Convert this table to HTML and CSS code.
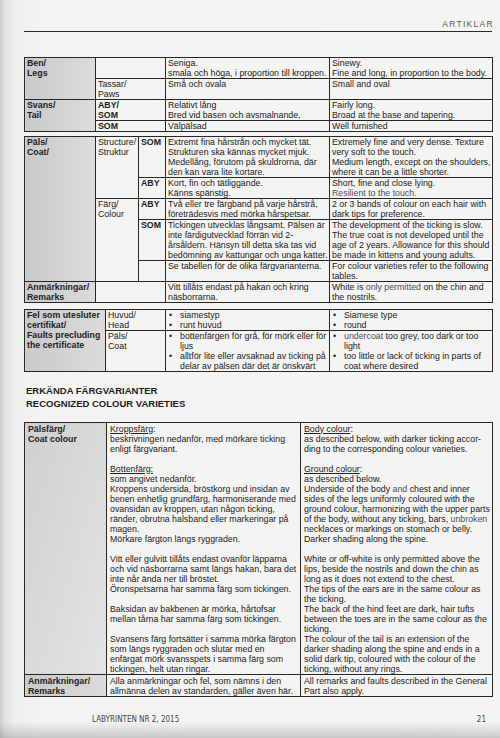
FILE: index.html
```html
<!DOCTYPE html>
<html lang="sv">
<head>
<meta charset="utf-8">
<title>Artiklar</title>
<link rel="stylesheet" href="styles.css">
</head>
<body>
<div class="page">
  <div class="header"><span>ARTIKLAR</span></div>

  <table class="t1">
    <colgroup><col class="c1"><col class="c2"><col class="c3"><col class="c4"></colgroup>
    <tr>
      <td class="lab" rowspan="2">Ben/<br>Legs</td>
      <td></td>
      <td>Seniga.<br>smala och höga, i proportion till kroppen.</td>
      <td>Sinewy.<br>Fine and long, in proportion to the body.</td>
    </tr>
    <tr>
      <td>Tassar/<br>Paws</td>
      <td>Små och ovala</td>
      <td>Small and oval</td>
    </tr>
    <tr>
      <td class="lab" rowspan="2">Svans/<br>Tail</td>
      <td class="b">ABY/<br>SOM</td>
      <td>Relativt lång<br>Bred vid basen och avsmalnande,</td>
      <td>Fairly long.<br>Broad at the base and tapering.</td>
    </tr>
    <tr>
      <td class="b">SOM</td>
      <td>Välpälsad</td>
      <td>Well furnished</td>
    </tr>
  </table>

  <table class="t1b">
    <colgroup><col class="c1"><col class="c2a"><col class="c2b"><col class="c3"><col class="c4"></colgroup>
    <tr>
      <td class="lab" rowspan="5">Päls/<br>Coat/</td>
      <td rowspan="2">Structure/<br>Struktur</td>
      <td class="b">SOM</td>
      <td>Extremt fina hårstrån och mycket tät.<br>Strukturen ska kännas mycket mjuk.<br>Medellång, förutom på skuldrorna, där<br>den kan vara lite kortare.</td>
      <td>Extremely fine and very dense. Texture<br>very soft to the touch.<br>Medium length, except on the shoulders,<br>where it can be a little shorter.</td>
    </tr>
    <tr>
      <td class="b">ABY</td>
      <td>Kort, fin och tätliggande.<br>Känns spänstig.</td>
      <td>Short, fine and close lying.<br><span class="soft">Resilient to the touch.</span></td>
    </tr>
    <tr>
      <td rowspan="3">Färg/<br>Colour</td>
      <td class="b">ABY</td>
      <td>Två eller tre färgband på varje hårstrå,<br>företrädesvis med mörka hårspetsar.</td>
      <td>2 or 3 bands of colour on each hair with<br>dark tips for preference.</td>
    </tr>
    <tr>
      <td class="b">SOM</td>
      <td>Tickingen utvecklas långsamt. Pälsen är<br>inte färdigutvecklad förrän vid 2-<br>årsåldern. Hänsyn till detta ska tas vid<br>bedömning av kattungar och unga katter.</td>
      <td>The development of the ticking is slow.<br>The true coat is not developed until the<br>age of 2 years. Allowance for this should<br>be made in kittens and young adults.</td>
    </tr>
    <tr>
      <td></td>
      <td>Se tabellen för de olika färgvarianterna.</td>
      <td>For colour varieties refer to the following<br>tables.</td>
    </tr>
    <tr>
      <td class="lab">Anmärkningar/<br>Remarks</td>
      <td colspan="2"></td>
      <td>Vitt tillåts endast på hakan och kring<br>näsborrarna.</td>
      <td>White is <span class="soft">only permitted</span> on the chin and<br>the nostrils.</td>
    </tr>
  </table>

  <table class="t2">
    <colgroup><col class="d1"><col class="d2"><col class="c3"><col class="c4"></colgroup>
    <tr>
      <td class="lab" rowspan="2">Fel som utesluter<br>certifikat/<br>Faults precluding<br>the certificate</td>
      <td>Huvud/<br>Head</td>
      <td><div class="bl"><i>•</i><span>siamestyp</span></div><div class="bl"><i>•</i><span>runt huvud</span></div></td>
      <td><div class="bl"><i>•</i><span>Siamese type</span></div><div class="bl"><i>•</i><span>round</span></div></td>
    </tr>
    <tr>
      <td>Päls/<br>Coat</td>
      <td><div class="bl"><i>•</i><span>bottenfärgen för grå, för mörk eller för<br>ljus</span></div><div class="bl"><i>•</i><span>alltför lite eller avsaknad av ticking på<br>delar av pälsen där det är önskvärt</span></div></td>
      <td><div class="bl"><i>•</i><span><span class="soft">undercoat</span> too grey, too dark or too<br>light</span></div><div class="bl"><i>•</i><span>too little or lack of ticking in parts of<br>coat where desired</span></div></td>
    </tr>
  </table>

  <h2 class="heading">ERKÄNDA FÄRGVARIANTER<br>RECOGNIZED COLOUR VARIETIES</h2>

  <table class="t3">
    <colgroup><col class="e1"><col class="e2"><col class="e3"></colgroup>
    <tr>
      <td class="lab lab3">Pälsfärg/<br>Coat colour</td>
      <td><u>Kroppsfärg</u>:<br>beskrivningen nedanför, med mörkare ticking<br>enligt färgvariant.<br>&nbsp;<br><u>Bottenfärg:</u><br>som angivet nedanför.<br>Kroppens undersida, bröstkorg und insidan av<br>benen enhetlig grundfärg, harmoniserande med<br>ovansidan av kroppen, utan någon ticking,<br>ränder, obrutna halsband eller markeringar på<br>magen.<br>Mörkare färgton längs ryggraden.<br>&nbsp;<br>Vitt eller gulvitt tillåts endast ovanför läpparna<br>och vid näsborrarna samt längs hakan, bara det<br>inte når ända ner till bröstet.<br>Öronspetsarna har samma färg som tickingen.<br>&nbsp;<br>Baksidan av bakbenen är mörka, hårtofsar<br>mellan tårna har samma färg som tickingen.<br>&nbsp;<br>Svansens färg fortsätter i samma mörka färgton<br>som längs ryggraden och slutar med en<br>enfärgat mörk svansspets i samma färg som<br>tickingen, helt utan ringar.</td>
      <td><u>Body colour</u>:<br>as described below, with darker ticking accor-<br>ding to the corresponding colour varieties.<br>&nbsp;<br><u>Ground colour</u>:<br>as described below.<br>Underside of the body <span class="soft">and</span> chest and inner<br>sides of the legs uniformly coloured with the<br>ground colour, harmonizing with the upper parts<br>of the body, without any ticking, bars, <span class="soft">unbroken</span><br>necklaces or markings on stomach or belly.<br>Darker shading along the spine.<br>&nbsp;<br>White or off-white is only permitted above the<br>lips, beside the nostrils and down the chin as<br>long as it does not extend to the chest.<br>The tips of the ears are in the same colour as<br>the ticking.<br>The back of the hind feet are dark, hair tufts<br>between the toes are in the same colour as the<br>ticking.<br>The colour of the tail is an extension of the<br>darker shading along the spine and ends in a<br>solid dark tip, coloured with the colour of the<br>ticking, without any rings.</td>
    </tr>
    <tr>
      <td class="lab">Anmärkningar/<br>Remarks</td>
      <td>Alla anmärkningar och fel, som nämns i den<br>allmänna delen av standarden, gäller även här.</td>
      <td>All remarks and faults described in the General<br>Part also apply.</td>
    </tr>
  </table>

  <div class="footer"><span>LABYRINTEN NR 2, 2015</span><span>21</span></div>
</div>
</body>
</html>
```

FILE: styles.css
```css
* { box-sizing: border-box; }
html, body { margin: 0; padding: 0; }
body {
  width: 500px;
  height: 738px;
  overflow: hidden;
  background:
    linear-gradient(to bottom, rgba(0,0,0,0) 722px, rgba(120,120,118,0.35) 738px),
    linear-gradient(to right, #cdcdcb 0, #e2e2e0 5px, #eeeeec 14px, #f3f3f1 40px, #f4f4f2 100%);
  font-family: "Liberation Sans", Arial, sans-serif;
  color: #222;
}
.page { padding: 0 8px 0 24px; }

.header {
  height: 32px;
  border-bottom: 1.5px solid #2a2a2a;
  display: flex;
  justify-content: flex-end;
  align-items: flex-end;
  padding-bottom: 2px;
}
.header span {
  font-size: 8.5px;
  line-height: 10px;
  letter-spacing: 1.3px;
  color: #555;
  margin-right: -2px;
}

table {
  border-collapse: collapse;
  table-layout: fixed;
  width: 468px;
}
td {
  border: 1px solid #262626;
  padding: 0 2px;
  vertical-align: top;
  font-size: 8.8px;
  line-height: 10px;
  white-space: nowrap;
  overflow: hidden;
}
.lab {
  font-weight: bold;
  background: linear-gradient(to right, #c9c9c9, #dcdcdc);
}
.b { font-weight: bold; }
.soft { color: #4a4f5a; }

.c1 { width: 71px; }
.c2 { width: 70px; }
.c2a { width: 43px; }
.c2b { width: 27px; }
.c3 { width: 164px; }
.c4 { width: 163px; }
.d1 { width: 81px; }
.d2 { width: 60px; }
.e1 { width: 82px; }
.e2 { width: 194px; }
.e3 { width: 192px; }

.t1 { margin-top: 25px; }
.t1b { margin-top: 4px; }
.t2 { margin-top: 6px; }

.bl { display: flex; }
.bl i { font-style: normal; width: 12px; flex: none; padding-left: 1px; }

.heading {
  margin: 12px 0 11px 2px;
  font-size: 9.5px;
  line-height: 13.3px;
  font-weight: bold;
  color: #1e1e1e;
}

.t3 td { padding: 1px 3px 0; }
.t3 .lab3 { background: linear-gradient(to bottom right, #cfcfcf, #e4e4e4); }

.footer {
  display: flex;
  justify-content: space-between;
  margin-top: 18px;
  padding: 0 6px 0 68px;
  font-family: "DejaVu Sans Condensed", "DejaVu Sans", sans-serif;
  font-stretch: condensed;
  font-size: 8px;
  line-height: 10px;
  color: #444;
}
```
